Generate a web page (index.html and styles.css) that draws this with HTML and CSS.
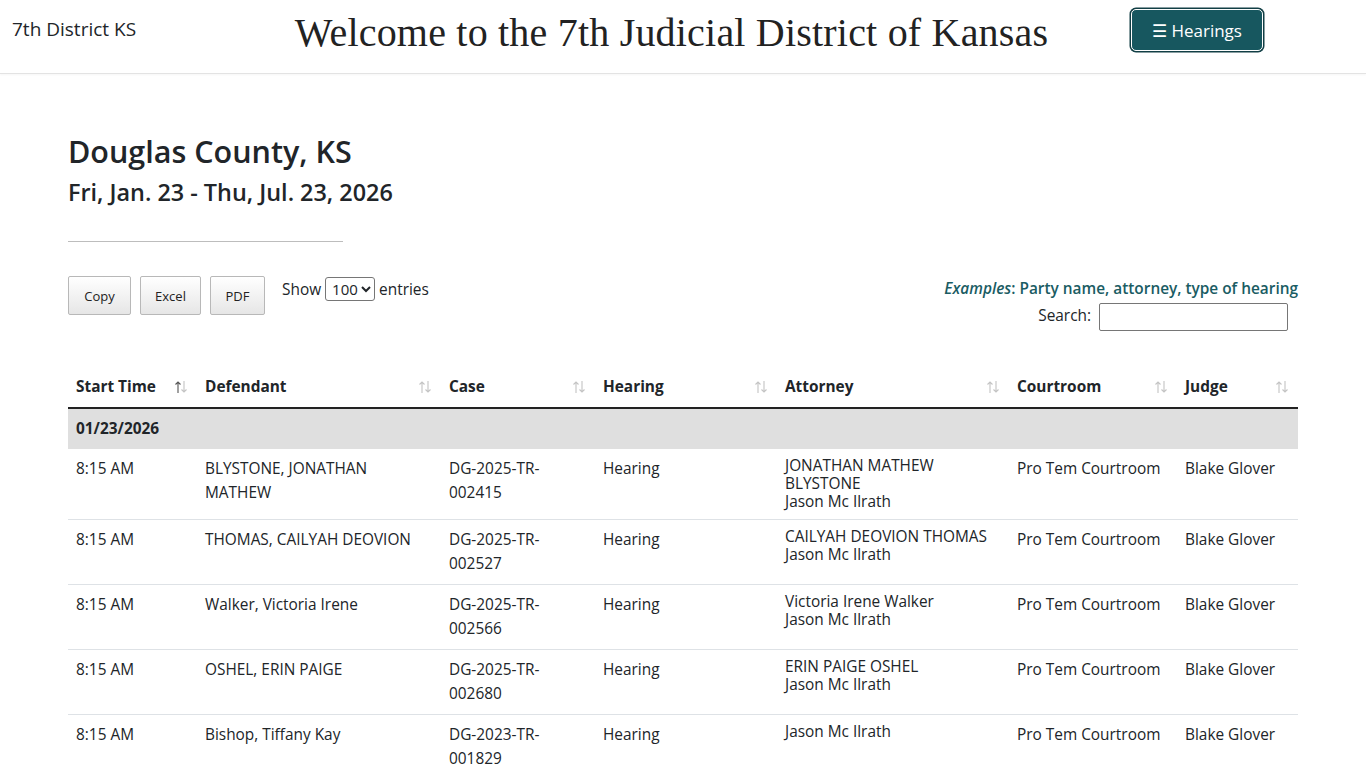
FILE: index.html
```html
<!DOCTYPE html>
<html lang="en">
<head>
<meta charset="utf-8">
<title>7th Judicial District of Kansas</title>
<link rel="stylesheet" href="styles.css">
</head>
<body>
<header class="navbar">
  <div class="brand">7th District KS</div>
  <h1 class="welcome">Welcome to the 7th Judicial District of Kansas</h1>
  <button class="hearings-btn">&#9776; Hearings</button>
</header>

<main class="container">
  <h2 class="county">Douglas County, KS</h2>
  <h4 class="range">Fri, Jan. 23 - Thu, Jul. 23, 2026</h4>
  <hr class="rule">

  <div class="controls">
    <div class="left-controls">
      <div class="btn-group">
        <button class="dt-btn">Copy</button>
        <button class="dt-btn">Excel</button>
        <button class="dt-btn">PDF</button>
      </div>
      <label class="length">Show <select class="len-select"><option>100</option></select> entries</label>
    </div>
    <div class="right-controls">
      <div class="examples"><em>Examples</em>: Party name, attorney, type of hearing</div>
      <label class="search">Search: <input type="text" class="search-input"></label>
    </div>
  </div>

  <table class="hearings">
    <colgroup>
      <col class="c1"><col class="c2"><col class="c3"><col class="c4"><col class="c5"><col class="c6"><col class="c7">
    </colgroup>
    <thead>
      <tr>
        <th><span class="th-in">Start Time <svg class="sort sorted" viewBox="0 0 14 14" width="14" height="14"><path class="up" d="M4 13V2M1.5 4.5L4 2l2.5 2.5"/><path class="down" d="M10 1v11M7.5 9.5L10 12l2.5-2.5"/></svg></span></th>
        <th><span class="th-in">Defendant <svg class="sort" viewBox="0 0 14 14" width="14" height="14"><path class="up" d="M4 13V2M1.5 4.5L4 2l2.5 2.5"/><path class="down" d="M10 1v11M7.5 9.5L10 12l2.5-2.5"/></svg></span></th>
        <th><span class="th-in">Case <svg class="sort" viewBox="0 0 14 14" width="14" height="14"><path class="up" d="M4 13V2M1.5 4.5L4 2l2.5 2.5"/><path class="down" d="M10 1v11M7.5 9.5L10 12l2.5-2.5"/></svg></span></th>
        <th><span class="th-in">Hearing <svg class="sort" viewBox="0 0 14 14" width="14" height="14"><path class="up" d="M4 13V2M1.5 4.5L4 2l2.5 2.5"/><path class="down" d="M10 1v11M7.5 9.5L10 12l2.5-2.5"/></svg></span></th>
        <th><span class="th-in">Attorney <svg class="sort" viewBox="0 0 14 14" width="14" height="14"><path class="up" d="M4 13V2M1.5 4.5L4 2l2.5 2.5"/><path class="down" d="M10 1v11M7.5 9.5L10 12l2.5-2.5"/></svg></span></th>
        <th><span class="th-in">Courtroom <svg class="sort" viewBox="0 0 14 14" width="14" height="14"><path class="up" d="M4 13V2M1.5 4.5L4 2l2.5 2.5"/><path class="down" d="M10 1v11M7.5 9.5L10 12l2.5-2.5"/></svg></span></th>
        <th><span class="th-in">Judge <svg class="sort" viewBox="0 0 14 14" width="14" height="14"><path class="up" d="M4 13V2M1.5 4.5L4 2l2.5 2.5"/><path class="down" d="M10 1v11M7.5 9.5L10 12l2.5-2.5"/></svg></span></th>
      </tr>
    </thead>
    <tbody>
      <tr class="group"><td colspan="7">01/23/2026</td></tr>
      <tr>
        <td>8:15 AM</td>
        <td>BLYSTONE, JONATHAN MATHEW</td>
        <td>DG-2025-TR-<br>002415</td>
        <td>Hearing</td>
        <td><div class="atty">JONATHAN MATHEW BLYSTONE<br>Jason Mc Ilrath</div></td>
        <td>Pro Tem Courtroom</td>
        <td>Blake Glover</td>
      </tr>
      <tr>
        <td>8:15 AM</td>
        <td>THOMAS, CAILYAH DEOVION</td>
        <td>DG-2025-TR-<br>002527</td>
        <td>Hearing</td>
        <td><div class="atty">CAILYAH DEOVION THOMAS<br>Jason Mc Ilrath</div></td>
        <td>Pro Tem Courtroom</td>
        <td>Blake Glover</td>
      </tr>
      <tr>
        <td>8:15 AM</td>
        <td>Walker, Victoria Irene</td>
        <td>DG-2025-TR-<br>002566</td>
        <td>Hearing</td>
        <td><div class="atty">Victoria Irene Walker<br>Jason Mc Ilrath</div></td>
        <td>Pro Tem Courtroom</td>
        <td>Blake Glover</td>
      </tr>
      <tr>
        <td>8:15 AM</td>
        <td>OSHEL, ERIN PAIGE</td>
        <td>DG-2025-TR-<br>002680</td>
        <td>Hearing</td>
        <td><div class="atty">ERIN PAIGE OSHEL<br>Jason Mc Ilrath</div></td>
        <td>Pro Tem Courtroom</td>
        <td>Blake Glover</td>
      </tr>
      <tr>
        <td>8:15 AM</td>
        <td>Bishop, Tiffany Kay</td>
        <td>DG-2023-TR-<br>001829</td>
        <td>Hearing</td>
        <td><div class="atty">Jason Mc Ilrath</div></td>
        <td>Pro Tem Courtroom</td>
        <td>Blake Glover</td>
      </tr>
    </tbody>
  </table>
</main>
</body>
</html>
```

FILE: styles.css
```css
* { box-sizing: border-box; }

html, body {
  margin: 0;
  padding: 0;
}

body {
  font-family: "Open Sans", "Noto Sans", sans-serif;
  font-size: 15.4px;
  line-height: 24px;
  color: #212529;
  background: #fff;
}

.navbar {
  height: 74px;
  display: flex;
  align-items: flex-start;
  border-bottom: 1px solid #e3e3e3;
  box-shadow: 0 1px 2px rgba(0,0,0,0.04);
  position: relative;
}

.brand {
  font-size: 19px;
  line-height: 24px;
  padding: 17px 0 0 12px;
  width: 272px;
}

.welcome {
  margin: 0;
  padding-top: 11px;
  font-family: "Liberation Serif", "DejaVu Serif", serif;
  font-weight: normal;
  font-size: 40px;
  line-height: 44px;
  color: #222;
  text-align: center;
  flex: 1;
  letter-spacing: 0.2px;
}

.hearings-btn {
  margin: 9px 103px 0 60px;
  width: 132px;
  height: 42px;
  background: #17575f;
  color: #fff;
  border: 1px solid #fff;
  box-shadow: 0 0 0 1.5px #123f45;
  border-radius: 5px;
  font-family: "Open Sans", "Noto Sans", sans-serif;
  font-size: 17px;
  padding: 0;
}

.container {
  padding: 0 68px;
}

.county {
  margin: 59px 0 0;
  font-size: 30.5px;
  font-weight: 600;
  line-height: 36px;
}

.range {
  margin: 8px 0 0;
  font-size: 23.4px;
  font-weight: 600;
  line-height: 30px;
}

.rule {
  margin: 34px 0 0;
  width: 275px;
  border: 0;
  border-top: 1px solid #bdbdbd;
}

.controls {
  margin-top: 34px;
  display: flex;
  justify-content: space-between;
  align-items: flex-start;
}

.left-controls {
  display: flex;
  align-items: flex-start;
}

.btn-group {
  display: flex;
  gap: 9px;
}

.dt-btn {
  height: 39px;
  padding: 0 14px;
  font-family: "Open Sans", "Noto Sans", sans-serif;
  font-size: 13px;
  color: #222;
  background: linear-gradient(#fff, #e6e6e6);
  border: 1px solid #b8b8b8;
  border-radius: 2px;
}

.dt-btn:nth-child(1) { width: 63px; }
.dt-btn:nth-child(2) { width: 61px; }
.dt-btn:nth-child(3) { width: 55px; }

.length {
  margin-left: 17px;
  margin-top: 1px;
}

.len-select {
  font-family: "Open Sans", "Noto Sans", sans-serif;
  font-size: 15px;
  height: 24px;
  border: 1px solid #767676;
  border-radius: 3px;
  padding: 0 0 0 2px;
  background: #fff;
  color: #212529;
}

.right-controls {
  text-align: right;
  margin-top: 1px;
}

.examples {
  color: #1a5c63;
  font-weight: 600;
}

.search {
  display: block;
  margin-top: 2px;
  padding-right: 10px;
}

.search-input {
  width: 189px;
  height: 28px;
  border: 1px solid #767676;
  border-radius: 2px;
  margin-left: 4px;
  vertical-align: middle;
}

.hearings {
  width: 100%;
  margin-top: 36px;
  border-collapse: collapse;
  table-layout: fixed;
}

.c1 { width: 129px; }
.c2 { width: 244px; }
.c3 { width: 154px; }
.c4 { width: 182px; }
.c5 { width: 232px; }
.c6 { width: 168px; }
.c7 { width: 121px; }

th {
  text-align: left;
  font-weight: 700;
  padding: 8px 8px;
  border-bottom: 2px solid #222;
}

.th-in {
  display: flex;
  justify-content: space-between;
  align-items: center;
}

.sort {
  flex: none;
  margin-right: 1px;
  fill: none;
  stroke-width: 1.1;
}

.sort path {
  stroke: #c4c4c4;
}

.sort.sorted .up {
  stroke: #555;
}

td {
  padding: 8px 8px;
  vertical-align: top;
  border-bottom: 1px solid #dee2e6;
}

tr.group td {
  background: #dfdfdf;
  font-weight: 700;
  border-bottom: 0;
}

.atty {
  line-height: 18px;
}
```
